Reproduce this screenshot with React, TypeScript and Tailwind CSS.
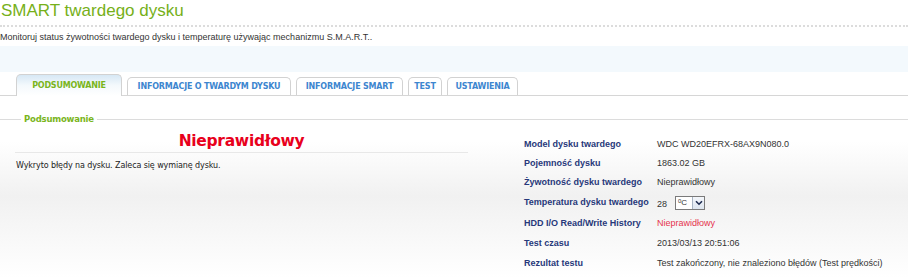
import React from "react";

const tabs = [
  { label: "PODSUMOWANIE", active: true, w: "w-[106px]" },
  { label: "INFORMACJE O TWARDYM DYSKU", active: false, w: "w-[164px]" },
  { label: "INFORMACJE SMART", active: false, w: "w-[107px]" },
  { label: "TEST", active: false, w: "w-[34px]" },
  { label: "USTAWIENIA", active: false, w: "w-[71px]" },
];

function Row({ label, children, h = "h-[19px]" }: { label: string; children: React.ReactNode; h?: string }) {
  return (
    <div className={`flex items-center ${h}`}>
      <div className="w-[133px] shrink-0 font-bold text-[#27387a]">{label}</div>
      <div className="text-[#333]">{children}</div>
    </div>
  );
}

export default function App() {
  return (
    <div
      className="w-[908px] h-[278px] overflow-hidden bg-white"
      style={{ fontFamily: '"Liberation Sans", Arial, sans-serif' }}
    >
      {/* title */}
      <div className="h-[25px] pl-[1px] pt-[1px] text-[17px] leading-[20px] text-[#76b01a]">
        SMART twardego dysku
      </div>
      <div className="border-b-2 border-dotted border-[#dcdcdc]" />
      <div className="h-[19px] flex items-center text-[9px] text-[#333] pt-[2px]">
        Monitoruj status żywotności twardego dysku i temperaturę używając mechanizmu S.M.A.R.T..
      </div>
      <div className="h-[26px] bg-[#f3f9fd]" />

      {/* tabs */}
      <div
        className="h-[24px] flex items-end gap-[5px] pl-[16px] border-b border-[#d6d6d6]"
        style={{ fontFamily: '"DejaVu Sans", Verdana, sans-serif' }}
      >
        {tabs.map((t) =>
          t.active ? (
            <div
              key={t.label}
              className={`${t.w} h-[22px] -mb-px flex items-center justify-center rounded-t-[5px] border border-b-0 border-[#d2d2d2] bg-gradient-to-b from-[#d7e8f5] via-[#f4f9fc] to-white text-[8px] font-bold text-[#7ab51c] tracking-[-0.2px]`}
            >
              {t.label}
            </div>
          ) : (
            <div
              key={t.label}
              className={`${t.w} h-[18px] flex items-center justify-center rounded-t-[5px] border border-b-0 border-[#d2d2d2] bg-white text-[8px] font-bold text-[#3d86cf] tracking-[-0.2px]`}
            >
              {t.label}
            </div>
          )
        )}
      </div>

      {/* content with background */}
      <div className="h-[182px] bg-gradient-to-b from-white from-[25%] via-[#f1f1f1] via-[55%] to-white">
        {/* fieldset legend line */}
        <div className="flex items-center pt-[17px] h-[30px]">
          <div className="w-[21px] h-px bg-[#dcdcdc]" />
          <div
            className="px-[3px] text-[8.5px] font-bold text-[#7ab51c] tracking-[-0.2px]"
            style={{ fontFamily: '"DejaVu Sans", Verdana, sans-serif' }}
          >
            Podsumowanie
          </div>
          <div className="flex-1 h-px bg-[#dcdcdc]" />
        </div>

        <div className="flex">
          {/* left */}
          <div className="ml-[15px] w-[453px]" style={{ fontFamily: '"DejaVu Sans", Verdana, sans-serif' }}>
            <div className="h-[25px] flex items-end justify-center text-[15.5px] font-bold text-[#e8001c] leading-[20px] tracking-[-0.3px]">
              Nieprawidłowy
            </div>
            <div className="h-px bg-[#e8e8e8] mt-[1px]" />
            <div className="pl-[1px] pt-[7px] text-[8px] text-[#222] leading-[12px] tracking-[-0.1px]">
              Wykryto błędy na dysku. Zaleca się wymianę dysku.
            </div>
          </div>

          {/* right */}
          <div className="ml-[56px] pt-[9px] text-[9px] leading-[11px]">
            <Row label="Model dysku twardego">WDC WD20EFRX-68AX9N080.0</Row>
            <Row label="Pojemność dysku">1863.02 GB</Row>
            <Row label="Żywotność dysku twardego">Nieprawidłowy</Row>
            <Row label="Temperatura dysku twardego" h="h-[21px]">
              <div className="flex items-center">
                <span className="mt-[3px]">28</span>
                <div className="ml-[8px] flex h-[14px] w-[30px] items-stretch border border-[#7a7a7a] bg-white">
                  <div className="flex-1 flex items-center pl-[2px] text-[8px] text-[#333]">
                    <span className="text-[6px] -mt-[3px]">0</span>C
                  </div>
                  <div className="w-[12px] flex items-center justify-center border-l border-[#a8b4c4] bg-gradient-to-b from-[#f4f7fb] to-[#dde5ef]">
                    <svg width="8" height="6" viewBox="0 0 8 6">
                      <path d="M1 1.2 L4 4.2 L7 1.2" stroke="#1d2a4f" strokeWidth="1.6" fill="none" />
                    </svg>
                  </div>
                </div>
              </div>
            </Row>
            <Row label="HDD I/O Read/Write History" h="h-[20px]">
              <span className="text-[#e5334d]">Nieprawidłowy</span>
            </Row>
            <Row label="Test czasu" h="h-[20px]">2013/03/13 20:51:06</Row>
            <Row label="Rezultat testu" h="h-[20px]">Test zakończony, nie znaleziono błędów (Test prędkości)</Row>
          </div>
        </div>
      </div>
    </div>
  );
}
